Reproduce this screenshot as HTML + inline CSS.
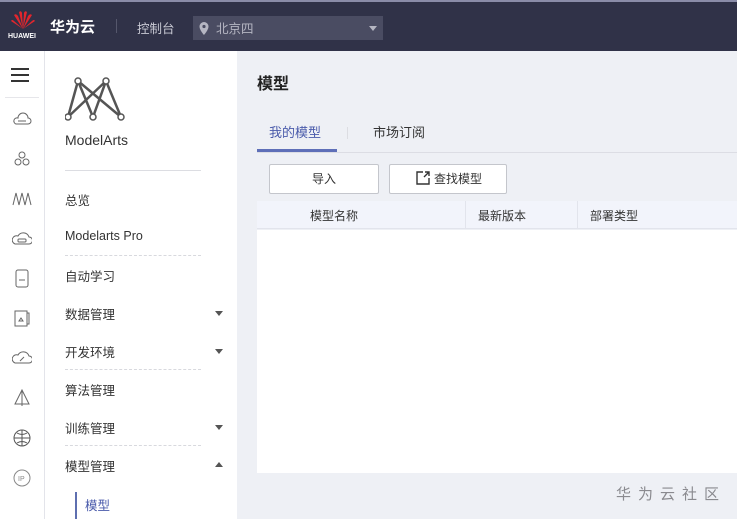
<!DOCTYPE html>
<html><head><meta charset="utf-8"><style>
*{margin:0;padding:0;box-sizing:border-box}
body{width:737px;height:519px;overflow:hidden;background:#eef0f5;font-family:"Liberation Sans","Noto Sans CJK SC",sans-serif;position:relative;color:#333}
.top{position:absolute;left:0;top:0;width:737px;height:51px;background:#303248;border-top:2px solid #8a8ca8}
.abs{position:absolute}
.icons{position:absolute;left:0;top:51px;width:45px;height:468px;background:#fff;border-right:1px solid #e3e4ea}
.side{position:absolute;left:45px;top:51px;width:192px;height:468px;background:#fff}
.item{position:absolute;left:20px;font-size:12.5px;color:#333}
.dash{position:absolute;left:20px;width:136px;border-top:1px dashed #d8d9de}
.arr{position:absolute;left:170px;width:0;height:0;border-left:4px solid transparent;border-right:4px solid transparent}
.ic{position:absolute;left:12px;width:20px;height:20px}
</style></head><body>
<div class="top">
 <svg class="abs" style="left:10px;top:8px" width="26" height="20" viewBox="0 0 26 20"><g fill="#e3262d"><path d="M13 19 L9 2 Q11 0 12 3Z"/><path d="M13 19 L17 2 Q15 0 14 3Z"/><path d="M13 19 L4 5 Q6 3 8 6Z"/><path d="M13 19 L22 5 Q20 3 18 6Z"/><path d="M13 19 L1 11 Q2 9 4 11Z"/><path d="M13 19 L25 11 Q24 9 22 11Z"/></g></svg>
 <div class="abs" style="left:8px;top:31px;font-size:7px;color:#fff;font-weight:bold">HUAWEI</div>
 <div class="abs" style="left:50px;top:14px;font-size:15px;color:#fff;font-weight:bold">华为云</div>
 <div class="abs" style="left:116px;top:17px;width:1px;height:14px;background:#55576c"></div>
 <div class="abs" style="left:137px;top:16px;font-size:12.5px;color:#c8c9d3">控制台</div>
 <div class="abs" style="left:193px;top:14px;width:190px;height:24px;background:#4a4c62"></div>
 <svg class="abs" style="left:199px;top:20px" width="10" height="13" viewBox="0 0 10 13"><path d="M5 0A4.5 4.5 0 0 0 .5 4.5C.5 8 5 13 5 13S9.5 8 9.5 4.5A4.5 4.5 0 0 0 5 0Z" fill="#b5b6c2"/><circle cx="5" cy="4.5" r="1.6" fill="#4a4c62"/></svg>
 <div class="abs" style="left:216px;top:16px;font-size:12.5px;color:#b5b6c2">北京四</div>
 <div class="abs" style="left:369px;top:24px;border-left:4px solid transparent;border-right:4px solid transparent;border-top:5px solid #b5b6c2"></div>
</div>
<div class="icons">
 <div class="abs" style="left:11px;top:17px;width:18px;height:2px;background:#333;box-shadow:0 6px 0 #333,0 12px 0 #333"></div>
 <div class="abs" style="left:5px;top:46px;width:34px;border-top:1px solid #e6e6ea"></div>
 <svg class="ic" style="top:58px" viewBox="0 0 20 20" fill="none" stroke="#666"><path d="M4 15h12a3 3 0 0 0 0-6 5 5 0 0 0-10 0 3 3 0 0 0-2 6z"/><path d="M6 12h8"/></svg>
 <svg class="ic" style="top:98px" viewBox="0 0 20 20" fill="none" stroke="#666"><circle cx="10" cy="6" r="3"/><circle cx="6" cy="13" r="3"/><circle cx="14" cy="13" r="3"/></svg>
 <svg class="ic" style="top:138px" viewBox="0 0 20 20" fill="none" stroke="#666"><path d="M1 16L4 4 7 16 10 4 13 16 16 4 19 16"/></svg>
 <svg class="ic" style="top:178px" viewBox="0 0 20 20" fill="none" stroke="#666"><path d="M3 15h14a3 3 0 0 0 0-7 6 6 0 0 0-11-1 4 4 0 0 0-3 8z"/><rect x="6" y="10" width="8" height="3" rx="1"/></svg>
 <svg class="ic" style="top:217px" viewBox="0 0 20 20" fill="none" stroke="#666"><rect x="4" y="2" width="12" height="17" rx="2"/><path d="M7 12h6"/></svg>
 <svg class="ic" style="top:257px" viewBox="0 0 20 20" fill="none" stroke="#666"><rect x="3" y="3" width="12" height="15"/><path d="M15 5h2v11h-2M7 13h4l-2-3z"/></svg>
 <svg class="ic" style="top:297px" viewBox="0 0 20 20" fill="none" stroke="#666"><path d="M3 15h14a3 3 0 0 0 0-7 6 6 0 0 0-11-1 4 4 0 0 0-3 8z"/><path d="M8 13l4-4"/></svg>
 <svg class="ic" style="top:337px" viewBox="0 0 20 20" fill="none" stroke="#666"><path d="M10 2L3 16h14zM10 2v16"/></svg>
 <svg class="ic" style="top:377px" viewBox="0 0 20 20" fill="none" stroke="#555"><circle cx="10" cy="10" r="8"/><path d="M2 10h16M10 2v16M5 5q5 3 10 0M5 15q5-3 10 0"/></svg>
 <svg class="ic" style="top:417px" viewBox="0 0 20 20" fill="none" stroke="#888"><circle cx="10" cy="10" r="8"/><text x="6" y="13" font-size="7" fill="#888" stroke="none" font-family="Liberation Sans">IP</text></svg>
</div>
<div class="side">
 <svg class="abs" style="left:20px;top:26px" width="60" height="44" viewBox="0 0 60 44" fill="none" stroke="#555" stroke-width="2.5"><path d="M3 40L13 4 28 40 41 4 56 40M13 4L56 40M41 4L3 40"/><g fill="#fff" stroke="#555" stroke-width="1.5"><circle cx="13" cy="4" r="3"/><circle cx="41" cy="4" r="3"/><circle cx="3" cy="40" r="3"/><circle cx="28" cy="40" r="3"/><circle cx="56" cy="40" r="3"/></g></svg>
 <div class="item" style="top:81px;font-size:14px">ModelArts</div>
 <div class="abs" style="left:20px;top:119px;width:136px;border-top:1px solid #dcdde2"></div>
 <div class="item" style="top:139px">总览</div>
 <div class="item" style="top:178px">Modelarts Pro</div>
 <div class="dash" style="top:204px"></div>
 <div class="item" style="top:215px">自动学习</div>
 <div class="item" style="top:253px">数据管理</div><div class="arr" style="top:260px;border-top:5px solid #555"></div>
 <div class="item" style="top:291px">开发环境</div><div class="arr" style="top:298px;border-top:5px solid #555"></div>
 <div class="dash" style="top:318px"></div>
 <div class="item" style="top:329px">算法管理</div>
 <div class="item" style="top:367px">训练管理</div><div class="arr" style="top:374px;border-top:5px solid #555"></div>
 <div class="dash" style="top:394px"></div>
 <div class="item" style="top:405px">模型管理</div><div class="arr" style="top:411px;border-bottom:5px solid #555"></div>
 <div class="abs" style="left:30px;top:441px;width:2px;height:27px;background:#5e6fb0"></div>
 <div class="item" style="left:40px;top:444px;color:#4a5bab">模型</div>
</div>
<div class="abs" style="left:257px;top:70px;font-size:16px;font-weight:bold;color:#222">模型</div>
<div class="abs" style="left:269px;top:122px;font-size:13px;color:#4a5bab">我的模型</div>
<div class="abs" style="left:347px;top:127px;width:1px;height:12px;background:#dcdde2"></div>
<div class="abs" style="left:373px;top:122px;font-size:13px;color:#333">市场订阅</div>
<div class="abs" style="left:257px;top:152px;width:480px;border-top:1px solid #dcdde4"></div>
<div class="abs" style="left:257px;top:149px;width:80px;height:3px;background:#5e6fb8"></div>
<div class="abs" style="left:269px;top:164px;width:110px;height:30px;background:#fff;border:1px solid #c4c6cc;border-radius:2px;font-size:12px;text-align:center;line-height:28px">导入</div>
<div class="abs" style="left:389px;top:164px;width:118px;height:30px;background:#fff;border:1px solid #c4c6cc;border-radius:2px;font-size:12px;line-height:28px;padding-left:44px">查找模型</div>
<svg class="abs" style="left:416px;top:171px" width="14" height="14" viewBox="0 0 14 14" fill="none" stroke="#333" stroke-width="1.4"><path d="M7 1H1v12h12V7M9 1h4v4M13 1L8 6"/></svg>
<div class="abs" style="left:257px;top:201px;width:480px;height:28px;background:#f2f4fb;border-bottom:1px solid #e2e4ec"></div>
<div class="abs" style="left:465px;top:201px;width:1px;height:28px;background:#e2e4ec"></div>
<div class="abs" style="left:577px;top:201px;width:1px;height:28px;background:#e2e4ec"></div>
<div class="abs" style="left:310px;top:207px;font-size:12px">模型名称</div>
<div class="abs" style="left:478px;top:207px;font-size:12px">最新版本</div>
<div class="abs" style="left:590px;top:207px;font-size:12px">部署类型</div>
<div class="abs" style="left:257px;top:230px;width:480px;height:243px;background:#fff"></div>
<div class="abs" style="left:616px;top:483px;font-size:15px;color:#8a8a8f;letter-spacing:7px">华为云社区</div>
</body></html>
